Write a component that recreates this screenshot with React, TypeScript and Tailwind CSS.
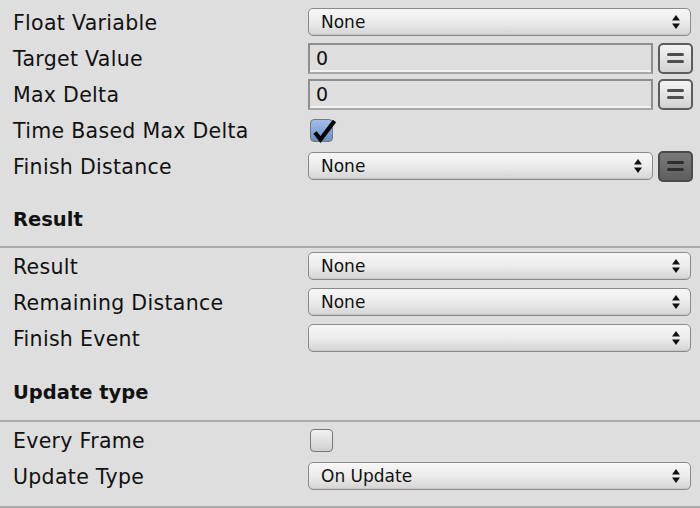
import React from 'react'

const font = { fontFamily: '"DejaVu Sans", "Liberation Sans", sans-serif' }

const Arrows: React.FC = () => (
  <svg width="8" height="14" viewBox="0 0 8 14" className="shrink-0">
    <path d="M4 0 L8 5.5 L0 5.5 Z" fill="#111" />
    <path d="M4 14 L8 8.5 L0 8.5 Z" fill="#111" />
  </svg>
)

const Dropdown: React.FC<{ value?: string; className?: string }> = ({
  value,
  className = ''
}) => (
  <div
    className={`h-[28px] flex items-center justify-between pl-[12px] pr-[10px] rounded-[5px] border border-[#8a8a8a] bg-gradient-to-b from-[#f7f7f7] via-[#ececec] to-[#d4d4d4] shadow-[inset_0_-1px_0_#c8c8c8] text-[17px] text-[#111] ${className}`}
  >
    <span className="pt-[1px]">{value}</span>
    <Arrows />
  </div>
)

const EqualsButton: React.FC<{ dark?: boolean }> = ({ dark }) => (
  <div
    className={`w-[35px] h-[31px] shrink-0 rounded-[5px] border-2 flex flex-col items-center justify-center gap-[4px] ${
      dark
        ? 'border-[#4a4a4a] bg-gradient-to-b from-[#7a7a7a] to-[#5e5e5e]'
        : 'border-[#5c5c5c] bg-gradient-to-b from-[#f4f4f4] to-[#d2d2d2]'
    }`}
  >
    <div
      className={`w-[17px] h-[3px] rounded-full ${dark ? 'bg-[#2e2e2e]' : 'bg-[#4e4e4e]'}`}
    />
    <div
      className={`w-[17px] h-[3px] rounded-full ${dark ? 'bg-[#2e2e2e]' : 'bg-[#4e4e4e]'}`}
    />
  </div>
)

const NumberField: React.FC<{ value: string }> = ({ value }) => (
  <div className="flex-1 h-[31px] flex items-center pl-[6px] pt-[1px] border-2 border-[#8e8e8e] border-b-[#a8a8a8] bg-[#dedede] shadow-[inset_0_-2px_0_#f2f2f2] text-[19px] text-[#111]">
    {value}
  </div>
)

const Checkbox: React.FC<{ checked?: boolean }> = ({ checked }) => (
  <div className="relative w-[23px] h-[23px] ml-[2px]">
    <div
      className={`w-full h-full rounded-[4px] border border-[#777] ${
        checked
          ? 'bg-gradient-to-b from-[#a3bee5] to-[#6a90c9]'
          : 'bg-gradient-to-b from-[#f2f2f2] to-[#cfcfcf]'
      }`}
    />
    {checked && (
      <svg
        width="30"
        height="26"
        viewBox="0 0 30 26"
        className="absolute left-0 top-0"
      >
        <path
          d="M5 13.5 L10.5 20.5 L24.5 2"
          fill="none"
          stroke="#000"
          strokeWidth="4.2"
          strokeLinejoin="miter"
        />
      </svg>
    )}
  </div>
)

const Row: React.FC<{ label: string; children: React.ReactNode }> = ({
  label,
  children
}) => (
  <div className="h-[36px] flex items-center">
    <div className="w-[308px] shrink-0 pl-[13px] pt-[2px] text-[20.5px] tracking-[0.3px] text-[#111]">
      {label}
    </div>
    <div className="flex-1 flex items-center pr-[7px]">{children}</div>
  </div>
)

const Header: React.FC<{ text: string; className: string }> = ({
  text,
  className
}) => (
  <>
    <div
      className={`flex items-center pt-[10px] pl-[13px] text-[19.5px] font-bold text-[#111] ${className}`}
    >
      {text}
    </div>
    <div className="h-[2px] bg-[#aaaaaa]" />
  </>
)

export default function App() {
  return (
    <div
      className="w-[700px] h-[508px] bg-[#dedede] overflow-hidden pt-[4px]"
      style={font}
    >
      <Row label="Float Variable">
        <Dropdown value="None" className="flex-1 mr-[2px]" />
      </Row>
      <Row label="Target Value">
        <div className="flex-1 flex items-center gap-[5px]">
          <NumberField value="0" />
          <EqualsButton />
        </div>
      </Row>
      <Row label="Max Delta">
        <div className="flex-1 flex items-center gap-[5px]">
          <NumberField value="0" />
          <EqualsButton />
        </div>
      </Row>
      <Row label="Time Based Max Delta">
        <Checkbox checked />
      </Row>
      <Row label="Finish Distance">
        <div className="flex-1 flex items-center gap-[5px]">
          <Dropdown value="None" className="flex-1" />
          <EqualsButton dark />
        </div>
      </Row>

      <Header text="Result" className="h-[62px]" />
      <Row label="Result">
        <Dropdown value="None" className="flex-1 mr-[2px]" />
      </Row>
      <Row label="Remaining Distance">
        <Dropdown value="None" className="flex-1 mr-[2px]" />
      </Row>
      <Row label="Finish Event">
        <Dropdown className="flex-1 mr-[2px]" />
      </Row>

      <Header text="Update type" className="h-[64px]" />
      <Row label="Every Frame">
        <Checkbox />
      </Row>
      <Row label="Update Type">
        <Dropdown value="On Update" className="flex-1 mr-[2px]" />
      </Row>
      <div className="h-[12px]" />
      <div className="h-[2px] bg-[#aaaaaa]" />
    </div>
  )
}
